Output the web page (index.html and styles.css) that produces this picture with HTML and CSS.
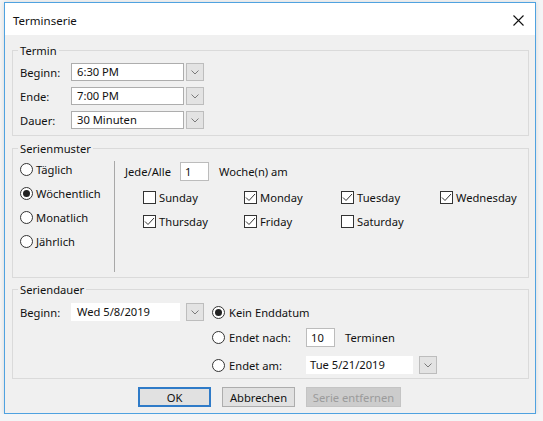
FILE: index.html
```html
<!DOCTYPE html>
<html lang="de">
<head>
<meta charset="utf-8">
<title>Terminserie</title>
<link rel="stylesheet" href="styles.css">
</head>
<body>
<div class="window">
  <div class="titlebar">
    <span class="title">Terminserie</span>
    <svg class="close" width="11" height="11" viewBox="0 0 11 11"><path d="M0.5 0.5 L10.5 10.5 M10.5 0.5 L0.5 10.5" stroke="#111" stroke-width="1.1" fill="none"/></svg>
  </div>
  <div class="body">
    <fieldset class="group termin">
      <legend>Termin</legend>
      <div class="row">
        <span class="lbl">Beginn:</span>
        <span class="field">6:30 PM</span>
        <span class="dd"><svg width="8" height="5" viewBox="0 0 8 5"><path d="M0.5 0.5 L4 4 L7.5 0.5" stroke="#7a7a7a" fill="none"/></svg></span>
      </div>
      <div class="row">
        <span class="lbl">Ende:</span>
        <span class="field">7:00 PM</span>
        <span class="dd"><svg width="8" height="5" viewBox="0 0 8 5"><path d="M0.5 0.5 L4 4 L7.5 0.5" stroke="#7a7a7a" fill="none"/></svg></span>
      </div>
      <div class="row">
        <span class="lbl">Dauer:</span>
        <span class="field">30 Minuten</span>
        <span class="dd"><svg width="8" height="5" viewBox="0 0 8 5"><path d="M0.5 0.5 L4 4 L7.5 0.5" stroke="#7a7a7a" fill="none"/></svg></span>
      </div>
    </fieldset>

    <fieldset class="group muster">
      <legend>Serienmuster</legend>
      <div class="muster-inner">
        <div class="freq">
          <div class="radio-row"><span class="radio"></span><span>Täglich</span></div>
          <div class="radio-row"><span class="radio on"></span><span>Wöchentlich</span></div>
          <div class="radio-row"><span class="radio"></span><span>Monatlich</span></div>
          <div class="radio-row"><span class="radio"></span><span>Jährlich</span></div>
        </div>
        <div class="sep"></div>
        <div class="weekly">
          <div class="every">
            <span class="every-lbl">Jede/Alle</span>
            <span class="num">1</span>
            <span class="weeks">Woche(n) am</span>
          </div>
          <div class="days">
            <div class="day"><span class="cb"></span><span>Sunday</span></div>
            <div class="day"><span class="cb"><svg width="11" height="11" viewBox="0 0 11 11"><path d="M1 5.5 L4 8.5 L10 2" stroke="#333" fill="none"/></svg></span><span>Monday</span></div>
            <div class="day"><span class="cb"><svg width="11" height="11" viewBox="0 0 11 11"><path d="M1 5.5 L4 8.5 L10 2" stroke="#333" fill="none"/></svg></span><span>Tuesday</span></div>
            <div class="day"><span class="cb"><svg width="11" height="11" viewBox="0 0 11 11"><path d="M1 5.5 L4 8.5 L10 2" stroke="#333" fill="none"/></svg></span><span>Wednesday</span></div>
            <div class="day"><span class="cb"><svg width="11" height="11" viewBox="0 0 11 11"><path d="M1 5.5 L4 8.5 L10 2" stroke="#333" fill="none"/></svg></span><span>Thursday</span></div>
            <div class="day"><span class="cb"><svg width="11" height="11" viewBox="0 0 11 11"><path d="M1 5.5 L4 8.5 L10 2" stroke="#333" fill="none"/></svg></span><span>Friday</span></div>
            <div class="day"><span class="cb"></span><span>Saturday</span></div>
          </div>
        </div>
      </div>
    </fieldset>

    <fieldset class="group dauer">
      <legend>Seriendauer</legend>
      <div class="dauer-inner">
        <div class="dauer-left">
          <span class="lbl">Beginn:</span>
          <span class="date">Wed 5/8/2019</span>
          <span class="dd"><svg width="8" height="5" viewBox="0 0 8 5"><path d="M0.5 0.5 L4 4 L7.5 0.5" stroke="#7a7a7a" fill="none"/></svg></span>
        </div>
        <div class="dauer-right">
          <div class="end-row"><span class="radio on"></span><span>Kein Enddatum</span></div>
          <div class="end-row second"><span class="radio"></span><span class="end-lbl">Endet nach:</span><span class="num">10</span><span class="weeks">Terminen</span></div>
          <div class="end-row third"><span class="radio"></span><span class="end-lbl">Endet am:</span><span class="date date2">Tue 5/21/2019</span><span class="dd"><svg width="8" height="5" viewBox="0 0 8 5"><path d="M0.5 0.5 L4 4 L7.5 0.5" stroke="#7a7a7a" fill="none"/></svg></span></div>
        </div>
      </div>
    </fieldset>

    <div class="buttons">
      <span class="btn ok">OK</span>
      <span class="btn">Abbrechen</span>
      <span class="btn disabled">Serie entfernen</span>
    </div>
  </div>
</div>
</body>
</html>
```

FILE: styles.css
```css
* { box-sizing: border-box; }

body {
  margin: 0;
  background: #f4f5f6;
  font-family: "Segoe UI", "Noto Sans", "Open Sans", sans-serif;
  font-size: 11.2px;
  color: #111;
}

.window {
  margin: 2px 0 0 4px;
  width: 532px;
  height: 412px;
  border: 1px solid #4fa2e0;
  background: #f0f0f0;
  display: flex;
  flex-direction: column;
  box-shadow: 0 0 5px rgba(0, 0, 0, 0.12);
}

.titlebar {
  height: 32px;
  flex: none;
  background: #fff;
  display: flex;
  align-items: center;
  justify-content: space-between;
  padding: 3px 11px 0 8px;
}

.title { font-size: 11.5px; }

.body {
  padding: 8px 6px 0 7px;
}

fieldset.group {
  margin: 0;
  min-width: 0;
  border: 1px solid #dadada;
  padding: 5px 7px 6px 7px;
}

legend {
  padding: 0 2px;
  margin-left: -2px;
  line-height: 15px;
}

.row {
  display: flex;
  align-items: center;
  height: 18px;
}
.row + .row { margin-top: 6px; }

.lbl { width: 51px; flex: none; }

.field {
  width: 113px;
  height: 18px;
  background: #fff;
  border: 1px solid #adadad;
  padding-left: 5px;
  line-height: 16px;
}

.dd {
  width: 18px;
  height: 18px;
  margin-left: 2px;
  background: #e3e3e3;
  border: 1px solid #bdbdbd;
  display: flex;
  align-items: center;
  justify-content: center;
  flex: none;
}

/* Serienmuster */
fieldset.muster {
  margin-top: 5px;
  padding: 1px 7px 5px 7px;
}

.muster-inner { display: flex; }

.freq {
  width: 94px;
  display: flex;
  flex-direction: column;
}

.radio-row {
  height: 24px;
  display: flex;
  align-items: center;
  gap: 3px;
}

.radio {
  width: 13px;
  height: 13px;
  border: 1px solid #333;
  border-radius: 50%;
  display: flex;
  align-items: center;
  justify-content: center;
  flex: none;
  background: #fff;
}
.radio.on::after {
  content: "";
  width: 7px;
  height: 7px;
  border-radius: 50%;
  background: #222;
}

.sep {
  width: 1px;
  height: 111px;
  margin-top: 4px;
  background: #a8a8a8;
}

.weekly { padding-left: 10px; }

.every {
  display: flex;
  align-items: center;
  margin-top: 5px;
  height: 19px;
}

.every-lbl { width: 55px; }

.num {
  width: 29px;
  height: 19px;
  background: #fff;
  border: 1px solid #bcbcbc;
  padding-left: 4px;
  line-height: 17px;
  flex: none;
}

.weeks { margin-left: 10px; }

.days {
  display: grid;
  grid-template-columns: 101px 97px 99px auto;
  grid-auto-rows: 24px;
  margin-top: 4px;
  padding-left: 18px;
}

.day {
  display: flex;
  align-items: center;
  gap: 3px;
}

.cb {
  width: 13px;
  height: 13px;
  border: 1px solid #333;
  background: #fff;
  display: flex;
  align-items: center;
  justify-content: center;
  flex: none;
}

/* Seriendauer */
fieldset.dauer {
  margin-top: 4px;
  padding: 3px 7px 1px 7px;
}

.dauer-inner { display: flex; }

.dauer-left {
  display: flex;
  align-items: center;
  height: 24px;
}

.date {
  width: 109px;
  height: 18px;
  background: #fff;
  padding-left: 6px;
  line-height: 18px;
  flex: none;
}

.dauer-left .dd { margin-left: 6px; }

.dauer-right {
  margin-left: 8px;
  display: flex;
  flex-direction: column;
}

.end-row {
  display: flex;
  align-items: center;
  height: 24px;
  gap: 4px;
}
.end-row.second { margin-top: 1px; }
.end-row.third { margin-top: 4px; }

.end-lbl { width: 73px; }

.end-row .weeks { margin-left: 6px; }

.date2 {
  width: 107px;
  padding-left: 4px;
}

.end-row .dd { margin-left: 2px; }

/* Buttons */
.buttons {
  display: flex;
  gap: 11px;
  margin-top: 8px;
  padding-left: 126px;
}

.btn {
  width: 73px;
  height: 20px;
  background: #e1e1e1;
  border: 1px solid #adadad;
  display: flex;
  align-items: center;
  justify-content: center;
}

.btn.ok { border: 2px solid #2f7bc8; }

.btn.disabled {
  width: 95px;
  background: #cccccc;
  border-color: #c4c4c4;
  color: #9b9b9b;
}
```
